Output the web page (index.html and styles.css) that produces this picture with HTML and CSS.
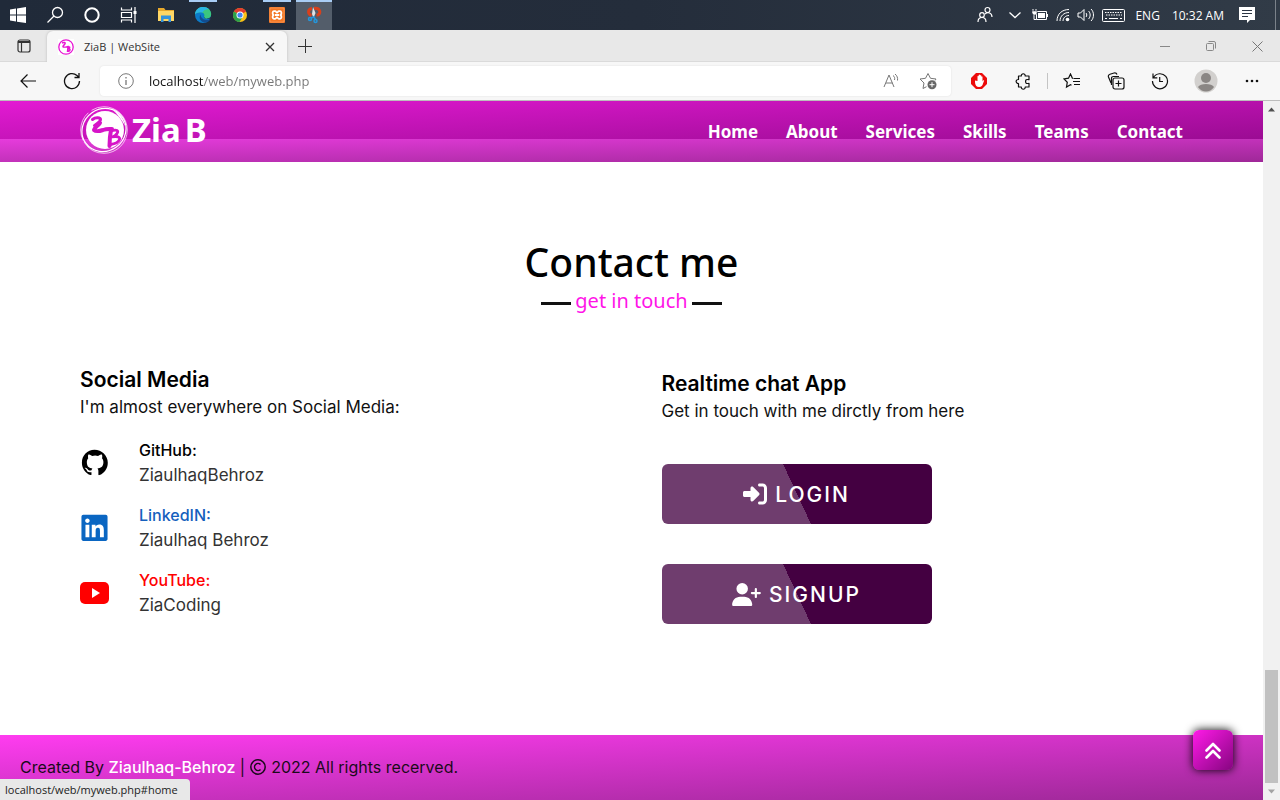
FILE: index.html
```html
<!DOCTYPE html>
<html lang="en">
<head>
<meta charset="utf-8">
<title>ZiaB | WebSite</title>
<meta name="viewport" content="width=device-width, initial-scale=1">
<link rel="stylesheet" href="styles.css">
</head>
<body>
<svg class="defs" aria-hidden="true">
  <symbol id="logo" viewBox="0 0 48 48">
    <circle cx="24" cy="24" r="23.300" fill="none" stroke="currentColor" stroke-width=".9" stroke-dasharray="60 2 30 4" opacity=".75"/>
    <ellipse cx="24" cy="24" rx="22.500" ry="21" fill="none" stroke="currentColor" stroke-width="1.200" transform="rotate(-35 24 24)"/>
    <path d="M33 4c7 3 11 9 12 16-3-6-7-11-12-16z" fill="currentColor"/>
    <circle cx="25" cy="24" r="19" fill="currentColor"/>
    <g fill="none" stroke="var(--ink)" stroke-linecap="round" stroke-linejoin="round">
      <path d="M12.500 13.500c3-2.500 8-2 8 0 0 2.500-4 4-6 6" stroke-width="3"/>
      <path d="M20 17c-2 3-5 4-6 7 2 2 6 1 9 0 4-1.500 6-1 9-1" stroke-width="4"/>
      <path d="M31 24c-1 5-1.500 11-1.500 16" stroke-width="4"/>
      <path d="M31 25c6-2 8 0 6 2.500-1 2-3 3-5 3.500 5-1 8.500 0 7.500 2.500-1 2.500-5 4.500-9 5" stroke-width="2.800"/>
    </g>
  </symbol>
</svg>

<div class="taskbar">
  <div class="apps">
    <button class="app" aria-label="Start"><svg width="18" height="16" viewBox="0 0 18 16" fill="#fff"><path d="M1 2.500l6-.9v6H1zM8 1.400L17 0v7.600H8zM1 8.500h6v6l-6-.9zM8 8.500h9V16l-9-1.300z"/></svg></button>
    <button class="app" aria-label="Search"><svg width="18" height="18" viewBox="0 0 18 18" fill="none" stroke="#fff" stroke-width="1.300"><circle cx="11.500" cy="6.500" r="5"/><path d="M8 10L1.500 16.500"/></svg></button>
    <button class="app" aria-label="Cortana"><svg width="18" height="18" viewBox="0 0 18 18" fill="none" stroke="#fff" stroke-width="2"><circle cx="9" cy="9" r="6.700"/></svg></button>
    <button class="app" aria-label="Task view"><svg width="18" height="18" viewBox="0 0 18 18" fill="none" stroke="#fff" stroke-width="1.200"><path d="M1.500 1.500v2.500h10V1.500M1.500 16.500V14h10v2.500M1.500 6.500h10v5h-10zM15 1v16"/><path d="M13.500 5h3v3h-3z" fill="#fff" stroke="none"/></svg></button>
    <button class="app" aria-label="File Explorer"><svg width="18" height="16" viewBox="0 0 18 16"><path d="M1 1h6l1.500 2H17v11H1z" fill="#e8a92c"/><path d="M1 4h16v10H1z" fill="#ffd765"/><path d="M4 15V8.500h10V15h-2.500v-3h-5v3z" fill="#3594dc"/></svg></button>
    <button class="app open" aria-label="Edge"><svg width="18" height="18" viewBox="0 0 18 18"><circle cx="9" cy="9" r="8" fill="#0c7bc9"/><path d="M1 8.500C1.500 3.500 5 1 9 1c5 0 8.200 3.300 8.200 7 0 3-2 4.500-4.500 4.500-2 0-3.200-.6-2.700-1.500.8-1 .7-4.500-3-4.700C4 6.200 2 7 1 8.500z" fill="#3bc77f"/><path d="M1 8.500C1.500 3.500 5 1 9 1c2.500 0 4.500.8 6 2.200C12 3 10 3.500 8.500 6.500 4.500 5.800 2 7 1 8.500z" fill="#2bb5e6"/><path d="M6.500 8.500c-2 3-.5 7.500 4.500 8 3 0 5-2 5.500-3.500-4 1.800-9.300 1-10-4.500z" fill="#124c8f"/><path d="M10 9.500c-.6 2.200 2 3.600 5 3.200l3-.7V9.500c-1 2-3 3-5.300 3-2 0-3.200-.6-2.700-1.500z" fill="#242d3b"/></svg></button>
    <button class="app" aria-label="Chrome"><svg width="16" height="16" viewBox="0 0 16 16"><circle cx="8" cy="8" r="7" fill="#fbc116"/><path d="M8 8L1.900 4.500A7 7 0 0 1 14.100 4.500z" fill="#e33b2e"/><path d="M8 8L1.900 4.500A7 7 0 0 0 7.500 15l3.500-5.500z" fill="#2ba14b"/><circle cx="8" cy="8" r="3.500" fill="#fff"/><circle cx="8" cy="8" r="2.600" fill="#4285f4"/></svg></button>
    <button class="app open" aria-label="XAMPP"><svg width="16" height="16" viewBox="0 0 16 16"><rect width="16" height="16" rx="1" fill="#f37623"/><rect x="1" y="1" width="14" height="14" rx="1" fill="none" stroke="#f9a56c" stroke-width=".6"/><path d="M5 4.200h1.200c1 0 1 1.300 1.800 1.300s.8-1.300 1.800-1.300H11c1.500 0 2 2.400.6 3.800 1.400 1.400.9 3.800-.6 3.800H9.800c-1 0-1-1.300-1.800-1.300s-.8 1.300-1.800 1.300H5c-1.500 0-2-2.400-.6-3.800C3 6.600 3.500 4.200 5 4.200zM6 8h4" fill="none" stroke="#fff" stroke-width="1.800"/></svg></button>
    <button class="app active" aria-label="Snipping Tool"><svg width="16" height="18" viewBox="0 0 16 18"><path d="M6 2.500C1.500 3 1.500 8 5.500 9.500M8 2.300c7-.8 7.500 6.500 2.500 7" fill="none" stroke="#d8401c" stroke-width="3"/><path d="M7 1L6 8l1.500 4L9.500 7z" fill="#dfe3e6"/><g fill="none" stroke="#2496dc" stroke-width="1.500"><circle cx="4" cy="13" r="1.500"/><circle cx="9.500" cy="15" r="1.500"/><path d="M5 12l3-1 1.500 2.500"/></g></svg></button>
  </div>
  <div class="tray">
    <svg width="16" height="18" viewBox="0 0 16 18" fill="none" stroke="#fff" stroke-width="1.200"><circle cx="10.500" cy="4" r="2.500"/><circle cx="5" cy="9" r="2.300"/><path d="M1 16c0-3 1.500-4.500 4-4.500S9 13 9 16M8 8c3-2.500 7-1 7 3"/></svg>
    <svg class="chev" width="14" height="8" viewBox="0 0 14 8" fill="none" stroke="#fff" stroke-width="1.300"><path d="M1.500 1.500l5.500 5 5.500-5"/></svg>
    <svg width="18" height="14" viewBox="0 0 18 14" fill="none" stroke="#fff"><path d="M5.500 3.500h10v8h-10zM16.500 6v3M2 1v2M5 1v2M3 7v4.500h2.500"/><path d="M7 5h7v5H7z" fill="#fff" stroke="none"/><path d="M1 3h5v2L4.500 7h-2L1 5z" fill="#fff" stroke="#2d3744" stroke-width=".5"/></svg>
    <svg width="14" height="14" viewBox="0 0 14 14" fill="none" stroke="#fff"><path d="M1 13C1 6 6 1.500 13 1.500M4 13c0-5 4-8.500 9-8.500M7 13c0-3 2.500-5.500 6-5.500" /><circle cx="11.500" cy="11.500" r="1.800" fill="#fff" stroke="none"/></svg>
    <svg width="18" height="14" viewBox="0 0 18 14" fill="none" stroke="#fff"><path d="M1 5h2.500L7 1.500v11L3.500 9H1zM9 5c1 1 1 3 0 4M11.500 3c2.200 2 2.200 6 0 8M14 1c3.300 3 3.300 9 0 12"/></svg>
    <svg width="23" height="13" viewBox="0 0 23 13" fill="none" stroke="#fff"><rect x=".5" y=".5" width="22" height="12" rx="1"/><path d="M3 3.500h17M4 6h16" stroke-dasharray="1.500 1"/><path d="M3 9.500h2M7 9.500h9M18 9.500h2"/></svg>
    <span class="lang">ENG</span>
    <span class="clock">10:32 AM</span>
    <svg width="16" height="16" viewBox="0 0 16 16"><path d="M0 0h16v13h-5l-3 3v-3H0z" fill="#fff"/><path d="M3 3.500h10M3 6.500h10M3 9.500h6" stroke="#2d3744" fill="none"/></svg>
    <span class="peek"></span>
  </div>
</div>

<div class="tabstrip">
  <button class="tabmenu" aria-label="Tab actions"><svg width="14" height="14" viewBox="0 0 14 14" fill="none" stroke="#333" stroke-width="1.200"><rect x="1" y="1" width="12" height="12" rx="2"/><path d="M1 3h12" stroke-width="2"/><path d="M4.500 4v9"/></svg></button>
  <div class="tab">
    <svg class="favicon" width="16" height="16" viewBox="0 0 16 16" fill="none" stroke="#e815d4"><rect width="16" height="16" fill="#fff" stroke="none"/><circle cx="8" cy="8" r="7.200" stroke-width="1.300"/><path d="M4 4c2-1 3.500-.5 3 .7S4.500 7 5 7.800s3 .2 5-.2l-.5 5.400M10 8c2-.5 2.500.8.300 2 2.400-.3 2.400 1.800-.5 2.500" stroke-width="1.500"/></svg>
    <span class="tabtitle">ZiaB | WebSite</span>
    <button aria-label="Close tab"><svg width="10" height="10" viewBox="0 0 10 10" stroke="#333" stroke-width="1.300"><path d="M1 1l8 8M9 1L1 9"/></svg></button>
  </div>
  <button class="newtab" aria-label="New tab"><svg width="14" height="14" viewBox="0 0 14 14" stroke="#333"><path d="M7.500 0v14M0 7.500h14"/></svg></button>
  <div class="winctl">
    <button aria-label="Minimize"><svg width="10" height="10" viewBox="0 0 10 10" stroke="#888"><path d="M0 5.500h10"/></svg></button>
    <button aria-label="Restore"><svg width="10" height="10" viewBox="0 0 10 10" fill="none" stroke="#888"><rect x=".5" y="2.500" width="7" height="7" rx="1"/><path d="M2.500.5H8A1.500 1.500 0 0 1 9.500 2v5.500"/></svg></button>
    <button aria-label="Close"><svg width="11" height="11" viewBox="0 0 11 11" stroke="#777"><path d="M.5.5l10 10M10.500.5l-10 10"/></svg></button>
  </div>
</div>

<div class="toolbar">
  <button class="tool" aria-label="Back"><svg width="18" height="16" viewBox="0 0 18 16" fill="none" stroke="#111" stroke-width="1.200"><path d="M17 8H2M8.500 1.500L2 8l6.500 6.500"/></svg></button>
  <button class="tool" aria-label="Refresh"><svg width="18" height="18" viewBox="0 0 18 18" fill="none" stroke="#111" stroke-width="1.300"><path d="M16.500 9A7.500 7.500 0 1 1 14 3.500l1.500 1.500M16 1v4.500h-4.500"/></svg></button>
  <div class="address">
    <svg width="16" height="16" viewBox="0 0 16 16" fill="none" stroke="#777"><circle cx="8" cy="8" r="7.300"/><path d="M8 7v5M8 4v1.500" stroke-width="1.300"/></svg>
    <input class="url" type="text" aria-label="Address" value="localhost/web/myweb.php">
    <svg width="18" height="16" viewBox="0 0 18 16" fill="none" stroke="#777"><path d="M1 14L6 2l5 12M3 10h6.500M10 2.500c1.500 1 2 2.500 1.500 4.500M12 1c2 1.500 3 4 2.500 6.500" /></svg>
    <svg width="18" height="18" viewBox="0 0 18 18"><path d="M16 8.500l1-1.500-5.500-.7L9 1.500 6.500 6.300 1 7l4 4-1 5.500 3.500-1.800" fill="none" stroke="#777"/><circle cx="13" cy="12.700" r="4.500" fill="#666"/><path d="M13 10.200v5M10.500 12.700h5" stroke="#fff"/></svg>
  </div>
  <div class="tools">
    <button class="tool" aria-label="Ad blocker"><svg width="16" height="16" viewBox="0 0 16 16"><path d="M5 0h6l5 5v6l-5 5H5l-5-5V5z" fill="#ec0b0b"/><path d="M4 7.500V9c0 3 1.500 5 4 5s3.500-1.500 4-3.500l1.200-3c-.6-.6-1.300-.2-1.700 1V4c0-1-1.200-1-1.200 0v3V2.800c0-1-1.300-1-1.300 0V7 2.300c0-1-1.300-1-1.300 0V7 3.500c0-1-1.200-1-1.200 0V8z" fill="#fff"/></svg></button>
    <button class="tool" aria-label="Extensions"><svg width="16" height="17" viewBox="0 0 16 17" fill="none" stroke="#111" stroke-width="1.200"><path d="M3.500 3h2.800c-.3-3 4.200-3 3.900 0H14v3.700c-3-.6-3.400.4-3.400 1.800s.4 2.400 3.400 1.800V14h-3.800c.3 3-4.200 3-3.900 0H3.500v-3.500C.3 10.500.3 6.500 3.500 6.500z" stroke-linejoin="round"/></svg></button>
    <span class="divider"></span>
    <button class="tool" aria-label="Favorites"><svg width="18" height="16" viewBox="0 0 18 16" fill="none" stroke="#111" stroke-width="1.200"><path d="M10 5.500L9.300 5 7.500 1 5.500 5.200 1 6l3.300 3.200L3.500 14l4-2.300 1 .5M10.500 5.500H17M10 8.500h7M11 11.500h6"/></svg></button>
    <button class="tool" aria-label="Collections"><svg width="18" height="18" viewBox="0 0 18 18" fill="none" stroke="#111" stroke-width="1.200"><path d="M4 11L1.500 5C1 3.500 1.500 2.700 3 2.200l4-1.200c1.500-.3 2.500 0 3 1.500M4.500 13V6.500c0-1.500.8-2 2-2H12"/><rect x="6" y="6" width="11" height="11" rx="2"/><path d="M11.500 8.500v6M8.500 11.500h6"/></svg></button>
    <button class="tool" aria-label="History"><svg width="18" height="18" viewBox="0 0 18 18" fill="none" stroke="#111" stroke-width="1.200"><path d="M2.500 5.500A7.500 7.500 0 1 1 1.500 9M2 1.500v4.300h4.300M8.700 5v4.500H12"/></svg></button>
    <button class="tool profile" aria-label="Profile"><svg width="24" height="24" viewBox="0 0 24 24"><circle cx="12" cy="12" r="11.500" fill="#d2d0ce"/><circle cx="12" cy="9" r="5" fill="#8a8684"/><path d="M4 18c2-4 14-4 16 0-4 6-12 6-16 0z" fill="#8a8684"/></svg></button>
    <button class="tool" aria-label="Settings"><svg width="14" height="4" viewBox="0 0 14 4" fill="#111"><circle cx="2" cy="2" r="1.300"/><circle cx="7" cy="2" r="1.300"/><circle cx="12" cy="2" r="1.300"/></svg></button>
  </div>
</div>

<div class="viewport">
  <div class="page">
    <header class="navbar">
      <a class="brand" href="#home"><svg width="48" height="48"><use href="#logo"/></svg><span>Zia</span><span>B</span></a>
      <nav class="menu">
        <a href="#home">Home</a>
        <a href="#about">About</a>
        <a href="#services">Services</a>
        <a href="#skills">Skills</a>
        <a href="#teams">Teams</a>
        <a href="#contact">Contact</a>
      </nav>
    </header>

    <main class="contact" id="contact">
      <h1>Contact me</h1>
      <p class="tagline">get in touch</p>
      <div class="columns">
        <section>
          <h2>Social Media</h2>
          <p class="lead">I'm almost everywhere on Social Media:</p>
          <ul class="socials">
            <li>
              <svg class="soc" viewBox="-.4 .1 16.800 16.800"><path d="M8 .5C3.800.5.700 3.800.700 8c0 3.400 2.200 6.200 5 7.200.4.070.55-.17.55-.38v-1.300c-2.010.37-2.530-.49-2.690-.94-.09-.23-.48-.94-.82-1.130-.28-.15-.68-.52-.01-.53.63-.01 1.080.58 1.230.82.72 1.210 1.870.87 2.330.66.07-.52.28-.87.510-1.070-1.780-.2-3.240-.89-3.240-3.750 0-.87.31-1.590.82-2.150-.08-.2-.36-1.020.08-2.120 0 0 .67-.21 2.200.82a7.500 7.500 0 0 1 3.400 0c1.530-1.040 2.200-.82 2.200-.82.44 1.100.16 1.920.08 2.120.51.56.82 1.270.82 2.150 0 2.870-1.670 3.550-3.450 3.750.29.25.54.73.54 1.480v2.040c0 .21.15.46.55.38 2.800-1 4.900-3.800 4.900-7.200C15.700 3.800 12.200.5 8 .5z" fill="#000"/></svg>
              <div><div class="net">GitHub:</div><div class="who">ZiaulhaqBehroz</div></div>
            </li>
            <li>
              <svg class="soc" viewBox="-25 18 498 498"><path fill="#0a66c2" d="M416 32H31.900C14.300 32 0 46.500 0 64.300v383.400C0 465.500 14.300 480 31.900 480H416c17.600 0 32-14.500 32-32.300V64.300c0-17.800-14.400-32.300-32-32.300zM135.400 416H69V202.200h66.500V416zm-33.200-243c-21.300 0-38.500-17.300-38.500-38.500S80.900 96 102.200 96c21.200 0 38.500 17.300 38.500 38.500 0 21.300-17.200 38.500-38.500 38.500zm282.100 243h-66.400V312c0-24.800-.5-56.700-34.500-56.700-34.600 0-39.900 27-39.900 54.900V416h-66.400V202.200h63.700v29.200h.9c8.900-16.800 30.600-34.500 62.900-34.500 67.200 0 79.700 44.300 79.700 101.900V416z"/></svg>
              <div><div class="net linkedin">LinkedIN:</div><div class="who">Ziaulhaq Behroz</div></div>
            </li>
            <li>
              <svg class="soc" viewBox="0 0 29 29"><rect y="3" width="29" height="22" rx="5" fill="#f00"/><path d="M12 9l8 5-8 5z" fill="#fff"/></svg>
              <div><div class="net youtube">YouTube:</div><div class="who">ZiaCoding</div></div>
            </li>
          </ul>
        </section>
        <section class="chat">
          <h2>Realtime chat App</h2>
          <p class="lead">Get in touch with me dirctly from here</p>
          <div class="actions">
            <button class="cta"><svg width="24" height="24" viewBox="0 0 512 512" fill="#fff"><path d="M217.900 105.900L340.700 228.700c7.200 7.200 11.300 17.100 11.300 27.300s-4.100 20.100-11.300 27.300L217.900 406.100c-6.400 6.400-15 9.900-24 9.900-18.700 0-33.900-15.200-33.900-33.900V320H32c-17.700 0-32-14.300-32-32v-64c0-17.700 14.300-32 32-32h128v-62.100c0-18.700 15.200-33.900 33.900-33.900 9 0 17.600 3.600 24 9.900zM352 416h64c17.700 0 32-14.300 32-32V128c0-17.700-14.300-32-32-32h-64c-17.700 0-32-14.300-32-32s14.300-32 32-32h64c53 0 96 43 96 96v256c0 53-43 96-96 96h-64c-17.700 0-32-14.300-32-32s14.300-32 32-32z"/></svg>LOGIN</button>
            <button class="cta"><svg width="29" height="23" viewBox="0 0 640 512" fill="#fff"><path d="M96 128a128 128 0 1 1 256 0A128 128 0 1 1 96 128zM0 482.300C0 383.800 79.800 304 178.300 304h91.400C368.200 304 448 383.800 448 482.300c0 16.400-13.300 29.700-29.700 29.700H29.700C13.300 512 0 498.700 0 482.300zM504 312v-64h-64c-13.300 0-24-10.700-24-24s10.700-24 24-24h64v-64c0-13.300 10.700-24 24-24s24 10.700 24 24v64h64c13.300 0 24 10.700 24 24s-10.700 24-24 24h-64v64c0 13.300-10.700 24-24 24s-24-10.700-24-24z"/></svg>SIGNUP</button>
          </div>
        </section>
      </div>
    </main>

    <footer class="footer">
      <span>Created By <a href="#home">Ziaulhaq-Behroz</a> | </span>
      <svg width="16" height="16" viewBox="0 0 16 16" fill="none" stroke="#1b0a1a" stroke-width="1.500"><circle cx="8" cy="8" r="7.200"/><path d="M10.500 5.500a3.500 3.500 0 1 0 0 5"/></svg>
      <span>2022 All rights recerved.</span>
    </footer>
    <a class="totop" href="#home" aria-label="Back to top"><svg width="18" height="18" viewBox="0 0 18 18" fill="none" stroke="#fff" stroke-width="2.600" stroke-linecap="round" stroke-linejoin="round"><path d="M2.500 9.500L9 3l6.500 6.500M2.500 16.500L9 10l6.500 6.500"/></svg></a>
    <div class="status">localhost/web/myweb.php#home</div>
  </div>
  <div class="scrollbar">
    <svg width="17" height="17" viewBox="0 0 17 17"><path d="M5 10.500h7L8.500 6.500z" fill="#505050"/></svg>
    <div class="track"><div class="thumb"></div></div>
    <svg width="17" height="17" viewBox="0 0 17 17"><path d="M5 6.500h7l-3.500 4z" fill="#a3a3a3"/></svg>
  </div>
</div>
</body>
</html>
```
FILE: styles.css
```css
* { box-sizing: border-box; margin: 0; padding: 0; }
body {
  display: flex;
  flex-direction: column;
  height: 100vh;
  overflow: hidden;
  font-family: Inter, sans-serif;
  background: #fff;
}
button { border: 0; background: none; font: inherit; color: inherit; display: flex; align-items: center; justify-content: center; }
a { color: inherit; text-decoration: none; }
svg { flex: none; display: block; }
.defs { position: absolute; width: 0; height: 0; }

/* System bar */
.taskbar {
  flex: none;
  display: flex;
  justify-content: space-between;
  height: 30px;
  background: linear-gradient(90deg, #202a39, #242d3b 50%, #313b47);
  color: #fff;
  font: 12px "Open Sans", sans-serif;
}
.apps { display: flex; gap: 1px; }
.app { width: 36px; height: 30px; }
.app.open { background: linear-gradient(#a9cdf5, #a9cdf5) center top / 28px 2px no-repeat; }
.app.active { background: linear-gradient(#a9cdf5 2px, #535d6a 2px); }
.tray { display: flex; align-items: center; gap: 7px; }
.chev { margin: 0 2px 0 8px; }
.lang { margin-left: 3px; }
.clock { margin: 0 8px 0 5px; }
.peek { width: 5px; height: 30px; margin-left: 13px; border-left: 1px solid #7b828a; }

/* Browser chrome */
.tabstrip {
  flex: none;
  display: flex;
  height: 32px;
  padding-top: 1px;
  background: #e8e8e8;
  border-bottom: 1px solid #dadada;
}
.tabmenu { width: 47px; }
.tab {
  display: flex;
  align-items: center;
  gap: 10px;
  width: 240px;
  height: 31px;
  padding: 0 12px 0 11px;
  background: #f7f7f7;
  border-radius: 6px 6px 0 0;
  box-shadow: 0 0 3px #bbb;
  clip-path: inset(-2px -4px 0 -4px);
  font: 11px "Open Sans", sans-serif;
  color: #333;
}
.tabtitle { flex: 1; }
.newtab { width: 36px; }
.winctl { display: flex; margin-left: auto; }
.winctl button { width: 46px; }
.toolbar {
  flex: none;
  display: flex;
  align-items: center;
  height: 39px;
  padding: 0 6px;
  background: #f7f7f7;
  border-bottom: 1px solid #bdbdbd;
}
.tool { width: 44px; height: 30px; }
.tool.profile { width: 48px; }
.address {
  flex: 1;
  display: flex;
  align-items: center;
  gap: 18px;
  height: 30px;
  margin: 0 6px;
  padding: 0 14px 0 18px;
  border-radius: 4px;
  background: #fff;
  box-shadow: 0 0 2px #ddd;
}
.url {
  flex: 1;
  min-width: 0;
  height: 24px;
  margin-left: -3px;
  border: 0;
  outline: 0;
  font: 13px "Open Sans", sans-serif;
  color: transparent;
  background: linear-gradient(90deg, #111 55px, #767676 55px);
  background-clip: text;
  -webkit-background-clip: text;
}
.tools { display: flex; align-items: center; }
.divider { width: 1px; height: 16px; margin: 0 2px; background: #c4c4c4; }
.viewport { flex: 1; min-height: 0; display: flex; }
.scrollbar { flex: none; width: 17px; display: flex; flex-direction: column; background: #f1f1f1; }
.track { flex: 1; display: flex; flex-direction: column; justify-content: flex-end; padding: 0 2px; }
.thumb { height: 17%; background: #c1c1c1; }

/* Site */
.page { position: relative; flex: 1; min-width: 0; display: flex; flex-direction: column; overflow: hidden; }
.navbar {
  display: flex;
  align-items: center;
  justify-content: space-between;
  padding: 5px 80px 8px;
  background:
    linear-gradient(to right, #e63bdc, #a8309f) center bottom / 100% 23px no-repeat,
    linear-gradient(to bottom right, #de18ce, #860580);
  background:
    linear-gradient(to bottom right, #e63bdc, #9f2898) center bottom / 100% 23px no-repeat,
    linear-gradient(to bottom right, #e31ad3, #8a0884);
  color: #fff;
  font-family: "Noto Sans", sans-serif;
}
.brand { display: flex; align-items: center; gap: 4px; font-size: 33px; line-height: 48px; font-weight: 700; --ink: #d614c8; }
.menu { display: flex; gap: 28px; padding-top: 2px; font-size: 17px; font-weight: 700; }
.contact { flex: 1; padding: 70px 80px 0; }
h1 { text-align: center; font: 500 39px/60px "Noto Sans", sans-serif; color: #000; }
.tagline {
  display: flex;
  align-items: center;
  justify-content: center;
  gap: 4px;
  margin-top: -4px;
  font: 20px/26px "Noto Sans", sans-serif;
  color: #ff14e8;
}
.tagline::before, .tagline::after { content: ""; width: 30px; height: 3px; margin-top: 4px; background: #111; }
.columns { display: grid; grid-template-columns: 1fr 1fr; gap: 60px; margin-top: 51px; }
h2 { font-size: 21px; line-height: 30px; font-weight: 600; color: #000; }
.lead { font-size: 17px; line-height: 24px; color: #111; }
.socials { list-style: none; display: grid; gap: 15px; margin-top: 19px; }
.socials li { display: flex; align-items: center; gap: 30px; line-height: 25px; font-size: 17px; }
.soc { width: 29px; height: 29px; }
.net { font-size: 16px; font-weight: 500; color: #000; }
.net.linkedin { color: #1560bd; }
.net.youtube { color: #f00; }
.who { color: #333; }
.chat { padding-top: 4px; }
.actions { display: grid; gap: 40px; justify-items: start; margin-top: 41px; }
.cta {
  gap: 8px;
  width: 270px;
  height: 60px;
  border-radius: 6px;
  background: linear-gradient(65deg, #6f3d6e 50%, #440041 50%);
  color: #fff;
  font-size: 21px;
  font-weight: 500;
  letter-spacing: 2px;
}
.footer {
  display: flex;
  align-items: center;
  gap: 5px;
  padding: 20px 20px 21px;
  background: linear-gradient(to bottom right, #ff3cf0, #9c2896);
  color: #1b0a1a;
  font-size: 16px;
  line-height: 24px;
}
.footer a { color: #fff; font-weight: 500; }
.totop {
  position: absolute;
  right: 30px;
  bottom: 30px;
  width: 40px;
  height: 40px;
  display: flex;
  align-items: center;
  justify-content: center;
  border-radius: 6px;
  background: linear-gradient(135deg, #ff1ae8, #860580);
  box-shadow: 0 0 10px #000;
}
.status {
  position: absolute;
  left: 0;
  bottom: 0;
  padding: 0 12px 0 5px;
  border-top-right-radius: 4px;
  background: #e8e8e8;
  font: 11px/21px "Open Sans", sans-serif;
  color: #222;
}
```
